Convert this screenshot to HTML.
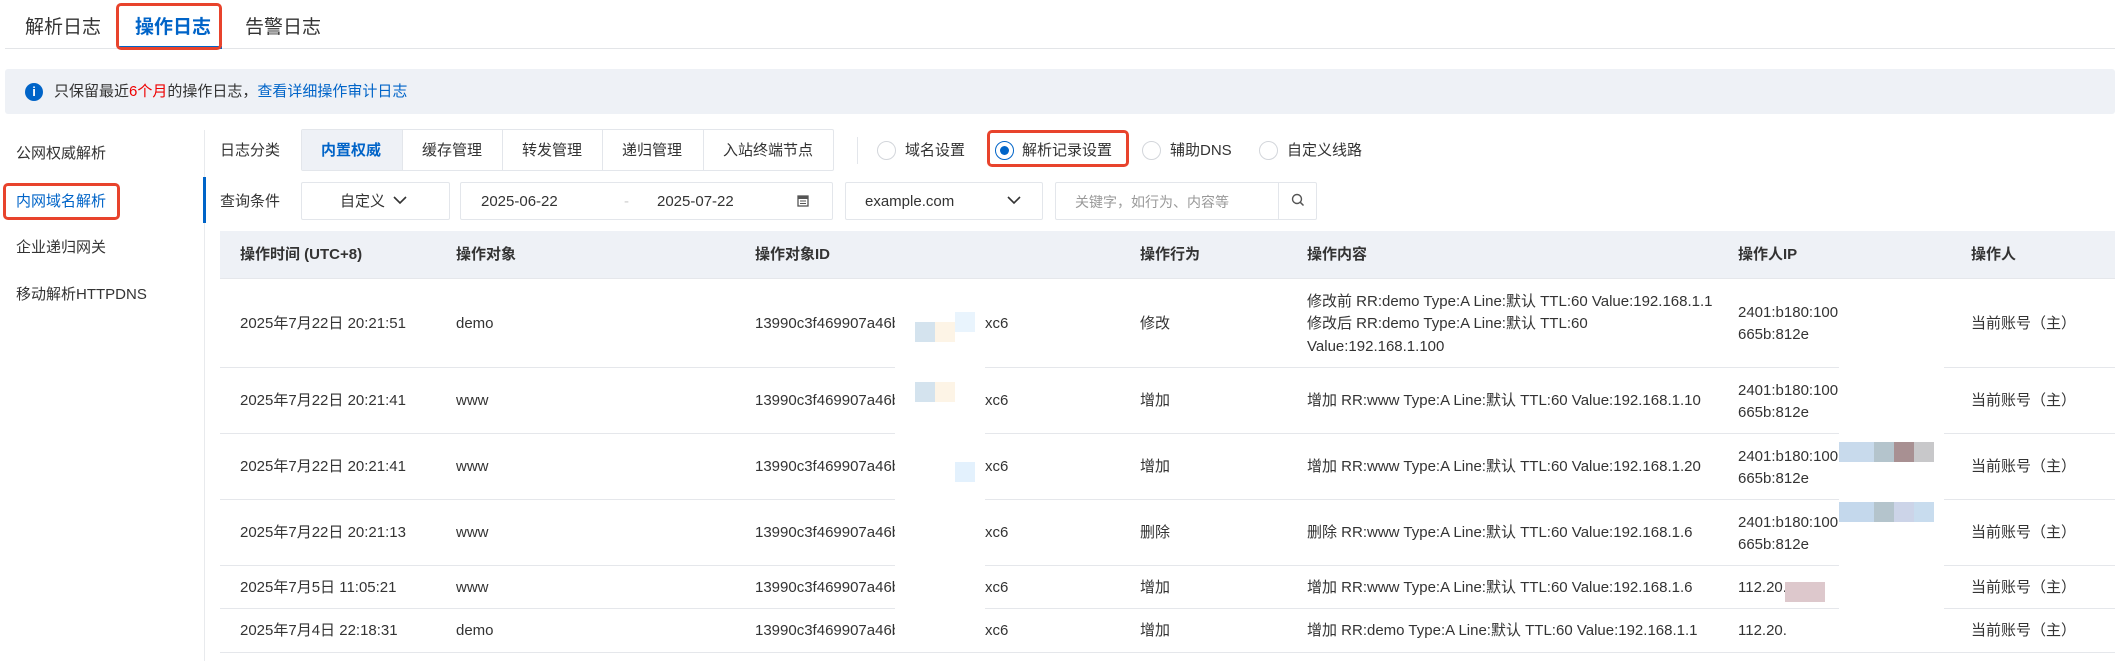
<!DOCTYPE html>
<html><head><meta charset="utf-8"><style>
*{margin:0;padding:0;box-sizing:border-box}
body{width:2115px;height:661px;overflow:hidden;background:#fff;font-family:"Liberation Sans","Noto Sans CJK SC",sans-serif;color:#333;font-size:15px;line-height:20px;position:relative}
.a{position:absolute;white-space:nowrap}
.box{position:absolute;border:1px solid #e3e6eb;background:#fff}
.red{position:absolute;border:3px solid #e8432c;border-radius:5px}
.rad{position:absolute;width:19px;height:19px;border:1px solid #d3d6db;border-radius:50%;background:#fff}
.hd{font-weight:bold;color:#333}
.ln{position:absolute;left:220px;right:0;height:1px;background:#e5e7eb}
.blk{position:absolute}
</style></head><body>
<!-- top tabs -->
<div class="a" style="left:25px;top:16px;font-size:19px;line-height:24px;color:#333">解析日志</div>
<div class="a" style="left:135px;top:16px;font-size:19px;line-height:24px;color:#0064c8;font-weight:bold">操作日志</div>
<div class="a" style="left:245px;top:16px;font-size:19px;line-height:24px;color:#333">告警日志</div>
<div class="a" style="left:5px;right:0;top:48px;height:1px;background:#e3e5e8"></div>
<div class="a" style="left:118px;top:46px;width:104px;height:3px;background:#0064c8"></div>
<div class="red" style="left:116px;top:3px;width:106px;height:47px"></div>
<!-- banner -->
<div class="a" style="left:5px;right:0;top:69px;height:45px;background:#eef1f6;border-radius:3px"></div>
<div class="a" style="left:25px;top:83px;width:18px;height:18px;border-radius:50%;background:#0064c8;color:#fff;font-size:13px;font-weight:bold;text-align:center;line-height:18px">i</div>
<div class="a" style="left:54px;top:82px;font-size:15px;color:#333">只保留最近<span style="color:#e00">6个月</span>的操作日志，<span style="color:#0064c8">查看详细操作审计日志</span></div>
<!-- sidebar -->
<div class="a" style="left:16px;top:144px">公网权威解析</div>
<div class="a" style="left:16px;top:192px;color:#0064c8">内网域名解析</div>
<div class="a" style="left:16px;top:238px">企业递归网关</div>
<div class="a" style="left:16px;top:285px">移动解析HTTPDNS</div>
<div class="red" style="left:3px;top:183px;width:117px;height:37px"></div>
<div class="a" style="left:204px;top:130px;width:1px;height:531px;background:#e8eaed"></div>
<div class="a" style="left:203px;top:177px;width:3px;height:46px;background:#0064c8"></div>
<!-- filter row 1 -->
<div class="a" style="left:220px;top:141px">日志分类</div>
<div class="box" style="left:301px;top:129px;width:533px;height:42px;border-radius:2px"></div>
<div class="a" style="left:302px;top:130px;width:100px;height:40px;background:#eef1f6"></div>
<div class="a" style="left:402px;top:130px;width:1px;height:40px;background:#e3e6eb"></div>
<div class="a" style="left:502px;top:130px;width:1px;height:40px;background:#e3e6eb"></div>
<div class="a" style="left:602px;top:130px;width:1px;height:40px;background:#e3e6eb"></div>
<div class="a" style="left:703px;top:130px;width:1px;height:40px;background:#e3e6eb"></div>
<div class="a" style="left:321px;top:141px;color:#0064c8;font-weight:bold">内置权威</div>
<div class="a" style="left:422px;top:141px">缓存管理</div>
<div class="a" style="left:522px;top:141px">转发管理</div>
<div class="a" style="left:622px;top:141px">递归管理</div>
<div class="a" style="left:723px;top:141px">入站终端节点</div>
<div class="a" style="left:857px;top:137px;width:1px;height:27px;background:#e3e6eb"></div>
<div class="rad" style="left:877px;top:141px"></div><div class="a" style="left:905px;top:141px">域名设置</div>
<div class="rad" style="left:995px;top:141px;border-color:#0064c8"><div style="position:absolute;left:4px;top:4px;width:9px;height:9px;border-radius:50%;background:#0064c8"></div></div>
<div class="a" style="left:1022px;top:141px">解析记录设置</div>
<div class="red" style="left:987px;top:130px;width:142px;height:37px"></div>
<div class="rad" style="left:1142px;top:141px"></div><div class="a" style="left:1170px;top:141px">辅助DNS</div>
<div class="rad" style="left:1259px;top:141px"></div><div class="a" style="left:1287px;top:141px">自定义线路</div>
<!-- filter row 2 -->
<div class="a" style="left:220px;top:192px">查询条件</div>
<div class="box" style="left:301px;top:182px;width:149px;height:38px;border-radius:2px"></div>
<div class="a" style="left:340px;top:192px">自定义</div>
<svg class="a" style="left:393px;top:195px" width="14" height="10"><path d="M1 2 L7 8 L13 2" fill="none" stroke="#333" stroke-width="1.6"/></svg>
<div class="box" style="left:460px;top:182px;width:373px;height:38px;border-radius:2px"></div>
<div class="a" style="left:481px;top:192px">2025-06-22</div>
<div class="a" style="left:624px;top:192px;color:#ccc">-</div>
<div class="a" style="left:657px;top:192px">2025-07-22</div>
<svg class="a" style="left:797px;top:194px" width="12" height="13"><rect x="1" y="2" width="10" height="10" fill="none" stroke="#555" stroke-width="1.3"/><rect x="1" y="2" width="10" height="3" fill="#555"/><path d="M3 7h6M3 9.5h6" stroke="#555"/></svg>
<div class="box" style="left:845px;top:182px;width:198px;height:38px;border-radius:2px"></div>
<div class="a" style="left:865px;top:192px">example.com</div>
<svg class="a" style="left:1007px;top:195px" width="14" height="10"><path d="M1 2 L7 8 L13 2" fill="none" stroke="#333" stroke-width="1.6"/></svg>
<div class="box" style="left:1055px;top:182px;width:262px;height:38px;border-radius:2px"></div>
<div class="a" style="left:1278px;top:183px;width:1px;height:36px;background:#e3e6eb"></div>
<div class="a" style="left:1075px;top:192px;color:#999;font-size:14px">关键字，如行为、内容等</div>
<svg class="a" style="left:1291px;top:193px" width="14" height="14"><circle cx="6" cy="6" r="4.5" fill="none" stroke="#555" stroke-width="1.4"/><path d="M9.3 9.3L12.5 12.5" stroke="#555" stroke-width="1.5"/></svg>
<!-- table header -->
<div class="a" style="left:220px;right:0;top:231px;height:47px;background:#eef1f6"></div>
<div class="a hd" style="left:240px;top:245px">操作时间 (UTC+8)</div>
<div class="a hd" style="left:456px;top:245px">操作对象</div>
<div class="a hd" style="left:755px;top:245px">操作对象ID</div>
<div class="a hd" style="left:1140px;top:245px">操作行为</div>
<div class="a hd" style="left:1307px;top:245px">操作内容</div>
<div class="a hd" style="left:1738px;top:245px">操作人IP</div>
<div class="a hd" style="left:1971px;top:245px">操作人</div>
<div class="ln" style="top:278px"></div>
<div class="ln" style="top:367px"></div>
<div class="ln" style="top:433px"></div>
<div class="ln" style="top:499px"></div>
<div class="ln" style="top:565px"></div>
<div class="ln" style="top:608px"></div>
<div class="ln" style="top:652px"></div>
<!-- row 1 -->
<div class="a" style="left:240px;top:314px">2025年7月22日 20:21:51</div>
<div class="a" style="left:456px;top:314px">demo</div>
<div class="a" style="left:755px;top:314px">13990c3f469907a46b</div>
<div class="a" style="left:985px;top:314px">xc6</div>
<div class="a" style="left:1140px;top:314px">修改</div>
<div class="a" style="left:1307px;top:292px">修改前 RR:demo Type:A Line:默认 TTL:60 Value:192.168.1.1</div>
<div class="a" style="left:1307px;top:314px">修改后 RR:demo Type:A Line:默认 TTL:60</div>
<div class="a" style="left:1307px;top:337px">Value:192.168.1.100</div>
<div class="a" style="left:1738px;top:303px">2401:b180:100(</div>
<div class="a" style="left:1738px;top:325px">665b:812e</div>
<div class="a" style="left:1971px;top:314px">当前账号（主）</div>
<!-- row 2 -->
<div class="a" style="left:240px;top:391px">2025年7月22日 20:21:41</div>
<div class="a" style="left:456px;top:391px">www</div>
<div class="a" style="left:755px;top:391px">13990c3f469907a46b</div>
<div class="a" style="left:985px;top:391px">xc6</div>
<div class="a" style="left:1140px;top:391px">增加</div>
<div class="a" style="left:1307px;top:391px">增加 RR:www Type:A Line:默认 TTL:60 Value:192.168.1.10</div>
<div class="a" style="left:1738px;top:381px">2401:b180:100(</div>
<div class="a" style="left:1738px;top:403px">665b:812e</div>
<div class="a" style="left:1971px;top:391px">当前账号（主）</div>
<!-- row 3 -->
<div class="a" style="left:240px;top:457px">2025年7月22日 20:21:41</div>
<div class="a" style="left:456px;top:457px">www</div>
<div class="a" style="left:755px;top:457px">13990c3f469907a46b</div>
<div class="a" style="left:985px;top:457px">xc6</div>
<div class="a" style="left:1140px;top:457px">增加</div>
<div class="a" style="left:1307px;top:457px">增加 RR:www Type:A Line:默认 TTL:60 Value:192.168.1.20</div>
<div class="a" style="left:1738px;top:447px">2401:b180:100(</div>
<div class="a" style="left:1738px;top:469px">665b:812e</div>
<div class="a" style="left:1971px;top:457px">当前账号（主）</div>
<!-- row 4 -->
<div class="a" style="left:240px;top:523px">2025年7月22日 20:21:13</div>
<div class="a" style="left:456px;top:523px">www</div>
<div class="a" style="left:755px;top:523px">13990c3f469907a46b</div>
<div class="a" style="left:985px;top:523px">xc6</div>
<div class="a" style="left:1140px;top:523px">删除</div>
<div class="a" style="left:1307px;top:523px">删除 RR:www Type:A Line:默认 TTL:60 Value:192.168.1.6</div>
<div class="a" style="left:1738px;top:513px">2401:b180:100(</div>
<div class="a" style="left:1738px;top:535px">665b:812e</div>
<div class="a" style="left:1971px;top:523px">当前账号（主）</div>
<!-- row 5 -->
<div class="a" style="left:240px;top:578px">2025年7月5日 11:05:21</div>
<div class="a" style="left:456px;top:578px">www</div>
<div class="a" style="left:755px;top:578px">13990c3f469907a46b</div>
<div class="a" style="left:985px;top:578px">xc6</div>
<div class="a" style="left:1140px;top:578px">增加</div>
<div class="a" style="left:1307px;top:578px">增加 RR:www Type:A Line:默认 TTL:60 Value:192.168.1.6</div>
<div class="a" style="left:1738px;top:578px">112.20.</div>
<div class="a" style="left:1971px;top:578px">当前账号（主）</div>
<!-- row 6 -->
<div class="a" style="left:240px;top:621px">2025年7月4日 22:18:31</div>
<div class="a" style="left:456px;top:621px">demo</div>
<div class="a" style="left:755px;top:621px">13990c3f469907a46b</div>
<div class="a" style="left:985px;top:621px">xc6</div>
<div class="a" style="left:1140px;top:621px">增加</div>
<div class="a" style="left:1307px;top:621px">增加 RR:demo Type:A Line:默认 TTL:60 Value:192.168.1.1</div>
<div class="a" style="left:1738px;top:621px">112.20.</div>
<div class="a" style="left:1971px;top:621px">当前账号（主）</div>
<!-- mosaic blocks -->
<div class="blk" style="left:895px;top:279px;width:90px;height:370px;background:#fff"></div>
<div class="blk" style="left:915px;top:322px;width:20px;height:20px;background:#d4e3ee"></div>
<div class="blk" style="left:935px;top:322px;width:20px;height:20px;background:#fdf4e6"></div>
<div class="blk" style="left:955px;top:312px;width:20px;height:20px;background:#e9f4fd"></div>
<div class="blk" style="left:915px;top:382px;width:20px;height:20px;background:#d4e3ee"></div>
<div class="blk" style="left:935px;top:382px;width:20px;height:20px;background:#fdf4e6"></div>
<div class="blk" style="left:955px;top:462px;width:20px;height:20px;background:#e3f1fd"></div>
<div class="blk" style="left:1839px;top:279px;width:105px;height:370px;background:#fff"></div>
<div class="blk" style="left:1839px;top:442px;width:35px;height:20px;background:#c8daec"></div>
<div class="blk" style="left:1874px;top:442px;width:20px;height:20px;background:#b4c4cc"></div>
<div class="blk" style="left:1894px;top:442px;width:20px;height:20px;background:#a89092"></div>
<div class="blk" style="left:1914px;top:442px;width:20px;height:20px;background:#c8c8ca"></div>
<div class="blk" style="left:1839px;top:502px;width:35px;height:20px;background:#c4d8ec"></div>
<div class="blk" style="left:1874px;top:502px;width:20px;height:20px;background:#b4c4cc"></div>
<div class="blk" style="left:1894px;top:502px;width:20px;height:20px;background:#ccd4e8"></div>
<div class="blk" style="left:1914px;top:502px;width:20px;height:20px;background:#c8dcee"></div>
<div class="blk" style="left:1785px;top:582px;width:40px;height:20px;background:#ddc8cc"></div>
</body></html>
